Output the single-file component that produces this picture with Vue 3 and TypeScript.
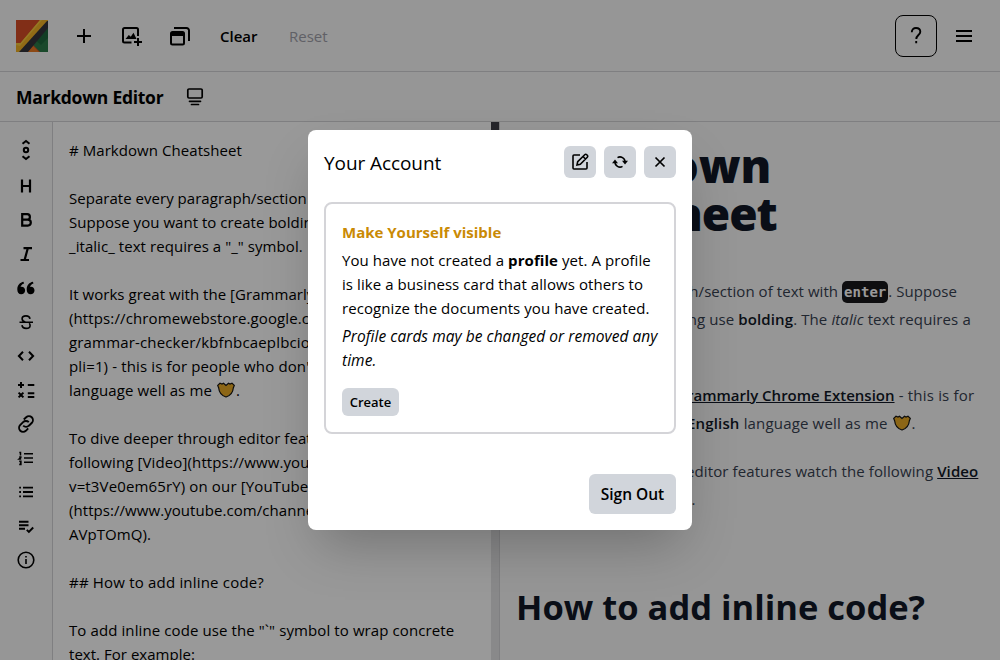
<script setup lang="ts">
import { ref } from 'vue'

interface Tool { name: string; height: number; fill?: string; stroke?: string; width?: number }
interface Line { text: string; spacing: number; heart?: boolean }

const tools: Tool[] = [
  { name: 'Scroll sync', height: 36, stroke: 'M8.500 4.800 12 2l3.500 2.800M8.500 17.200l3.500 2.800 3.500-2.800M14.200 11a2.200 2.200 0 1 1-4.400 0 2.200 2.200 0 0 1 4.400 0', width: 2 },
  { name: 'Heading', height: 34, stroke: 'M8 5.500v13M16 5.500v13M8 12h8', width: 2.2 },
  { name: 'Bold', height: 34, stroke: 'M8.200 6.200h5a2.700 2.700 0 0 1 0 5.400h-5zM8.200 11.600h5.600a3 3 0 0 1 0 6H8.200z', width: 2.2 },
  { name: 'Italic', height: 34, stroke: 'M9.500 6.200h8.500M6.500 18h8.500M13.800 6.200l-3.200 11.800', width: 2.2 },
  { name: 'Quote', height: 34, fill: 'M9.500 5.800C6 6.500 3.300 9.200 3.300 13.400c0 2.900 1.500 4.800 3.900 4.800 2.200 0 3.900-1.600 3.900-3.800 0-2.100-1.500-3.700-3.500-3.700-.5 0-.9.1-1.100.2.4-1.600 1.600-2.800 3.600-3.500zM18.900 5.800c-3.500.7-6.200 3.400-6.200 7.600 0 2.900 1.500 4.800 3.900 4.800 2.200 0 3.900-1.600 3.900-3.800 0-2.100-1.500-3.700-3.500-3.700-.5 0-.9.1-1.100.2.4-1.600 1.600-2.800 3.600-3.500z' },
  { name: 'Strikethrough', height: 34, stroke: 'M5.500 12.200h13.500M16 8.800c-.3-1.900-1.700-2.900-4-2.900s-3.900 1.100-3.900 2.900c0 1.600 1.200 2.700 3.200 3.200M8 15.200c.2 2.100 1.800 3.200 4.100 3.200 2.400 0 4-1.100 4-3 0-.9-.3-1.600-.9-2.200', width: 1.6 },
  { name: 'Code', height: 34, stroke: 'M9 7.800 4.900 12 9 16.200M15 7.800l4.100 4.200-4.100 4.200', width: 2 },
  { name: 'Math', height: 34, stroke: 'M4 7h6M7 4v6M13.800 7h6.500M4.600 14.600l4.800 4.800M9.400 14.600l-4.800 4.800M13.800 15.300h6.500M13.800 18.900h6.500', width: 2 },
  { name: 'Link', height: 34, stroke: 'm9.800 7.500 2.400-2.300a4 4 0 0 1 5.700 5.600l-3 2.900a4 4 0 0 1-5.700 0M14.200 16.400l-2.400 2.400a4 4 0 0 1-5.700-5.600l3-3a4 4 0 0 1 5.700 0', width: 1.9 },
  { name: 'Numbered list', height: 34, stroke: 'M10 7.700h9M10 12h9M10 16.300h9M5.300 6.400h1.200v3M5.200 11h1.600v.7L5.200 13h2M5.200 15.300h1.700v3.200H5.200M5.800 16.900h1', width: 1.5 },
  { name: 'List', height: 34, stroke: 'M9 7.700h10M9 12h10M9 16.300h10M5.200 7.700H7M5.200 12H7M5.200 16.300H7', width: 1.8 },
  { name: 'Task list', height: 34, stroke: 'M5 7.700h9.500M5 11.200h9.500M5 14.700h6M12.800 15.800l2.100 2.100 4.300-4.400', width: 1.9 },
  { name: 'Info', height: 34, stroke: 'M19.800 12a7.800 7.800 0 1 1-15.600 0 7.800 7.800 0 0 1 15.600 0M12 11v5M12 8v1.600', width: 1.6 },
]

const source: Line[] = [
  { text: '# Markdown Cheatsheet', spacing: 0.06 },
  { text: '', spacing: 0 },
  { text: 'Separate every paragraph/section of text with `enter`.', spacing: 0.03 },
  { text: 'Suppose you want to create bolding use **bolding**. The', spacing: 0.04 },
  { text: '_italic_ text requires a "_" symbol.', spacing: 0.06 },
  { text: '', spacing: 0 },
  { text: 'It works great with the [Grammarly Chrome Extension]', spacing: 0.04 },
  { text: '(https://chromewebstore.google.com/detail/grammarly-', spacing: 0.12 },
  { text: 'grammar-checker/kbfnbcaeplbcioakkpcpgfkobkghlhen?', spacing: 0.16 },
  { text: "pli=1) - this is for people who don't know **English**", spacing: 0.14 },
  { text: 'language well as me ', spacing: 0.12, heart: true },
  { text: '', spacing: 0 },
  { text: 'To dive deeper through editor features watch the', spacing: 0.06 },
  { text: 'following [Video](https://www.youtube.com/watch?', spacing: 0.12 },
  { text: 'v=t3Ve0em65rY) on our [YouTube channel]', spacing: 0.14 },
  { text: '(https://www.youtube.com/channel/UCg3avsGct9zd_zK9', spacing: 0.06 },
  { text: 'AVpTOmQ).', spacing: 0.05 },
  { text: '', spacing: 0 },
  { text: '## How to add inline code?', spacing: 0.19 },
  { text: '', spacing: 0 },
  { text: 'To add inline code use the "`" symbol to wrap concrete', spacing: 0.1 },
  { text: 'text. For example:', spacing: 0.03 },
]

const open = ref(true)
</script>

<template>
  <div class="app">
    <header class="top">
      <svg class="logo" viewBox="0 0 32 32">
        <path fill="#d84e27" d="M0 0h32v32H0z" />
        <path fill="#2c7a48" d="M29 4h3v28h-8L17 25z" />
        <path fill="#1f683d" d="M19.500 20 32 8v10L25 25z" />
        <path fill="#ea7a24" d="M11 32 17 26l6 6z" />
        <path fill="#f2b225" d="M24 0h8v1L4 32H0V23h4.500z" />
        <path fill="#f9c93d" d="M24 0h2L4 26 0 25v-2h4.500z" />
        <path fill="#34343b" d="M31 1h1v7L12 32H3z" />
      </svg>
      <button class="icon plus" aria-label="Create">
        <svg width="24" height="24" viewBox="0 0 24 24"><path class="line" stroke-width="2" d="M12 5v14M5 12h14" /></svg>
      </button>
      <button class="icon image" aria-label="Add image">
        <svg width="24" height="24" viewBox="0 0 24 24">
          <path class="line" stroke-width="2" d="M11.500 18.500H4.500A1.500 1.500 0 0 1 3 17V5.500A1.500 1.500 0 0 1 4.500 4h12A1.500 1.500 0 0 1 18 5.500V12M18 14v8M14 18h8" />
          <path d="m5.500 15 3.300-4 2 1.700 2.700-4 3 6.300z" />
        </svg>
      </button>
      <button class="icon docs" aria-label="Documents">
        <svg width="24" height="24" viewBox="0 0 24 24">
          <path class="line" stroke-width="2" d="M4.500 8h10A1.500 1.500 0 0 1 16 9.500V19a1.500 1.500 0 0 1-1.500 1.500h-10A1.500 1.500 0 0 1 3 19V9.500A1.500 1.500 0 0 1 4.500 8zM6 4h12.500A2.500 2.500 0 0 1 21 6.500V17" />
          <path d="M3 8h13v4H3z" />
        </svg>
      </button>
      <span class="clear">Clear</span>
      <span class="reset">Reset</span>
      <button class="help" aria-label="Help"><svg width="14" height="20" viewBox="0 0 14 20"><path class="line" stroke-width="1.900" d="M2.800 6.200C2.800 3.700 4.500 2 7 2s4.300 1.600 4.300 3.800c0 3.200-4 3.400-4 7.200M7.200 15v2.200" /></svg></button>
      <button class="icon menu" aria-label="Menu"><svg width="16" height="12" viewBox="0 0 16 12"><path d="M0 0h16v2H0zM0 5h16v2H0zM0 10h16v2H0z" /></svg></button>
    </header>

    <div class="sub">
      <h2>Markdown Editor</h2>
      <svg width="24" height="24" viewBox="0 0 24 24"><path class="line" stroke-width="1.700" stroke-linecap="round" d="M6 4h12a1.200 1.200 0 0 1 1.200 1.200v6.600A1.200 1.200 0 0 1 18 13H6a1.200 1.200 0 0 1-1.200-1.200V5.200A1.200 1.200 0 0 1 6 4zM6.500 16.300h11M8.500 19.500h7" /></svg>
    </div>

    <main class="work">
      <nav class="rail">
        <div v-for="t in tools" :key="t.name" class="tool" :style="{ height: t.height + 'px' }">
          <svg width="24" height="24" viewBox="0 0 24 24">
            <path v-if="t.fill" :d="t.fill" />
            <path v-if="t.stroke" class="line" :stroke-width="t.width" :d="t.stroke" />
          </svg>
        </div>
      </nav>
      <section class="editor">
        <p v-for="(line, i) in source" :key="i" :style="{ letterSpacing: line.spacing + 'px' }">{{ line.text }}<template v-if="line.heart"><svg class="heart" viewBox="0 0 18 16"><path fill="#e9ab25" stroke="#151515" stroke-width="1.200" d="M9 15C4.500 13.500 2 10 1.700 6L.7 3.500 3 1.200 5 2l1.500-.8L9 3.400l2.500-2.200L13 2l2-.8 2.300 2.300-1 2.500C16 10 13.500 13.500 9 15z" /></svg>.</template></p>
      </section>
      <div class="scroll"><div class="thumb"></div></div>
      <section class="preview">
        <h1><span class="h1a">Markdown</span><br /><span class="h1b">Cheatsheet</span></h1>
        <p class="a">Separate every paragraph/section of text with <code>enter</code>. Suppose<br /><span class="a2">you want to create bolding use <b>bolding</b>. The <i>italic</i> text requires a</span><br />"_" symbol.</p>
        <p class="b">It works great with the <a>Grammarly Chrome Extension</a><span class="wide"> - this is for</span><br /><span class="b2">people who don't know <b>English</b> language well as me <svg class="heart" viewBox="0 0 18 16"><path fill="#e9ab25" stroke="#151515" stroke-width="1.200" d="M9 15C4.500 13.500 2 10 1.700 6L.7 3.500 3 1.200 5 2l1.500-.8L9 3.400l2.500-2.200L13 2l2-.8 2.300 2.300-1 2.500C16 10 13.500 13.500 9 15z" /></svg>.</span></p>
        <p class="c">To dive deeper through editor features watch the following <a>Video</a><br /><span class="c2">on our <a>YouTube channel</a>.</span></p>
        <h3>How to add inline code?</h3>
      </section>
    </main>

    <div v-if="open" class="overlay">
      <div class="modal" role="dialog">
        <div class="head">
          <span class="title">Your Account</span>
          <button class="sq" aria-label="Edit"><svg width="20" height="20" viewBox="0 0 20 20"><path class="line" stroke-width="1.600" d="M10 3H4a1 1 0 0 0-1 1v12a1 1 0 0 0 1 1h12a1 1 0 0 0 1-1v-6M7 13l.7-3.300 7-7a1.400 1.400 0 0 1 2 0l.6.6a1.400 1.400 0 0 1 0 2l-7 7zM13 4.500l2.500 2.500" /></svg></button>
          <button class="sq" aria-label="Refresh"><svg width="20" height="20" viewBox="0 0 20 20"><path class="line" stroke-width="1.600" d="M7.500 5.600A5 5 0 0 1 15 10M12.500 14.400A5 5 0 0 1 5 10" /><path d="M2 11.200 5 7.500l3 3.700zM12 8.800l3 3.700 3-3.700z" /></svg></button>
          <button class="sq" aria-label="Close" @click="open = false"><svg width="20" height="20" viewBox="0 0 20 20"><path class="line" stroke-width="1.700" d="m5.500 5.500 9 9M14.500 5.500l-9 9" /></svg></button>
        </div>
        <div class="card">
          <h4>Make Yourself visible</h4>
          <p>You have not created a <b>profile</b> yet. A profile<br />is like a business card that allows others to<br />recognize the documents you have created.</p>
          <p class="note">Profile cards may be changed or removed any<br />time.</p>
          <button class="create">Create</button>
        </div>
        <button class="signout">Sign Out</button>
      </div>
    </div>
  </div>
</template>

<style>
body { margin: 0; overflow: hidden; }
</style>

<style scoped>
* { box-sizing: border-box; }
.app { position: relative; width: 1000px; height: 660px; overflow: hidden; display: flex; flex-direction: column; background: #fafafa; color: #000; font: 15px/24px "Segoe UI", "Open Sans", "Noto Sans", sans-serif; }
h1, h2, h3, h4, p { margin: 0; }
button { border: 0; padding: 0; background: none; font: inherit; color: inherit; display: flex; align-items: center; justify-content: center; }
svg { display: block; flex: none; }
.line { fill: none; stroke: currentColor; }
.top { height: 72px; flex: none; border-bottom: 1px solid #d4d4d8; display: flex; align-items: center; padding: 0 28px 0 16px; }
.logo { width: 32px; height: 32px; }
.plus { margin-left: 24px; }
.image, .docs { margin-left: 24px; }
.clear, .reset { font-weight: 600; }
.clear { margin-left: 28px; width: 69px; }
.reset { color: #a1a1aa; font-weight: 500; }
.help { width: 42px; height: 42px; border: 1px solid #000; border-radius: 8px; margin-left: auto; }
.menu { margin-left: 19px; }
.sub { height: 50px; flex: none; border-bottom: 1px solid #d4d4d8; display: flex; align-items: center; padding-left: 16px; }
h2 { font-size: 17.500px; letter-spacing: -.27px; font-weight: 700; width: 167px; white-space: nowrap; }
.work { flex: 1; display: flex; min-height: 0; }
.rail { width: 53px; border-right: 1px solid #d4d4d8; padding-top: 11px; display: flex; flex-direction: column; }
.tool { display: flex; align-items: center; justify-content: center; flex: none; }
.editor { width: 438px; background: #fff; padding: 16px; overflow: hidden; white-space: pre; }
.editor p { height: 24px; white-space: pre; }
.heart { display: inline-block; width: 18px; height: 16px; vertical-align: -2px; margin: 0 1px; }
.scroll { width: 9px; background: #e4e4e7; border-right: 1px solid #d4d4d8; }
.thumb { width: 8px; height: 300px; background: #3f3f46; }
.preview { flex: 1; padding: 19px 16px; overflow: hidden; white-space: nowrap; color: #374151; line-height: 28px; }
.preview p { margin-bottom: 20px; }
h1 { font-size: 46px; line-height: 48px; font-weight: 800; color: #111827; margin-bottom: 40px; }
.h1a { letter-spacing: -.2px; }
.h1b { letter-spacing: -1.100px; }
.a { letter-spacing: .06px; }
.a2 { letter-spacing: .11px; }
.wide { letter-spacing: .2px; }
.b2 { letter-spacing: .17px; }
.c { letter-spacing: .1px; }
.c2 { letter-spacing: 0; }
.preview b, .preview a { color: #111827; font-weight: 600; }
.preview a { text-decoration: underline; }
.preview code { background: #18181b; color: #fff; border-radius: 5px; padding: 3px 2px; letter-spacing: 0; font: 700 14px "DejaVu Sans Mono", monospace; }
h3 { font-size: 34.500px; line-height: 40px; font-weight: 700; color: #111827; margin-top: 74px; }
.overlay { position: absolute; inset: 0; background: rgba(0, 0, 0, .4); display: flex; align-items: center; justify-content: center; }
.modal { width: 384px; height: 400px; background: #fff; border-radius: 8px; padding: 16px; box-shadow: 0 25px 50px -12px rgba(0, 0, 0, .25); display: flex; flex-direction: column; white-space: nowrap; }
.head { display: flex; align-items: center; gap: 8px; height: 32px; }
.title { font-size: 19px; letter-spacing: -.08px; margin-right: auto; padding-top: 2px; }
.sq { width: 32px; height: 32px; border-radius: 6px; background: #d1d5db; }
.card { margin-top: 24px; height: 232px; border: 2px solid #d4d4d8; border-radius: 8px; padding: 16px; letter-spacing: .07px; }
h4 { font-size: 15px; font-weight: 700; color: #ca8a04; margin-bottom: 4px; letter-spacing: 0; }
.note { font-size: 15.500px; font-style: italic; margin-top: 4px; letter-spacing: .04px; }
.create { margin-top: 16px; width: 57px; height: 28px; border-radius: 6px; background: #d1d5db; font-size: 13px; font-weight: 600; }
.signout { width: 87px; height: 40px; margin: 40px 0 0 auto; border-radius: 6px; background: #d1d5db; font-size: 15.500px; font-weight: 600; }
</style>
